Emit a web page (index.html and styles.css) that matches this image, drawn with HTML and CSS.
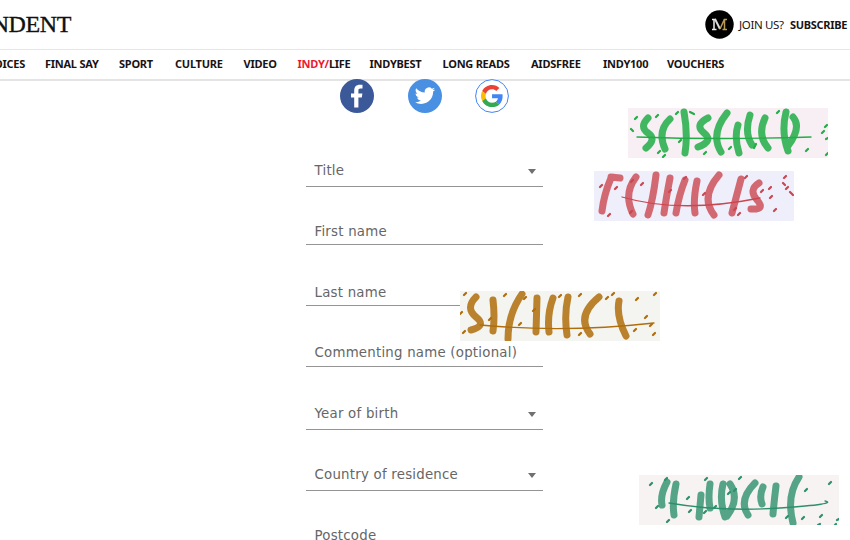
FILE: index.html
```html
<!DOCTYPE html>
<html lang="en">
<head>
<meta charset="utf-8">
<title>Register</title>
<link rel="stylesheet" href="styles.css">
</head>
<body>
<header class="masthead">
  <div class="brand">INDEPENDENT</div>
  <div class="account">
    <svg class="member" viewBox="0 0 29 29"><circle cx="14.5" cy="14.5" r="14.2" fill="#000"/><g fill="none"><path d="M7 9.500h4M9 9v11M7 19.500h4.500" stroke="#eee" stroke-width="1.500"/><path d="M10 9l5 10" stroke="#ddd" stroke-width="2"/><path d="M15 19l4.500-10M19.500 9v11M17.500 19.500h4.500M19 9.500h3" stroke="#b99a56" stroke-width="1.500"/></g></svg>
    <span class="join">JOIN US?</span><b class="subscribe">SUBSCRIBE</b>
  </div>
</header>
<nav class="nav">
  <a class="first">VOICES</a><a>FINAL SAY</a><a>SPORT</a><a>CULTURE</a><a>VIDEO</a><a><span class="red">INDY/</span>LIFE</a><a>INDYBEST</a><a>LONG READS</a><a>AIDSFREE</a><a>INDY100</a><a>VOUCHERS</a>
</nav>
<main class="form">
  <div class="social">
    <svg viewBox="0 0 34 34"><circle cx="17" cy="17" r="17" fill="#3b5998"/><path fill="#fff" d="M14.200 28.500V18.500H11v-4h3.200v-2.800c0-4 2.100-6 5.600-6h2.700v3.800h-2c-1.600 0-2.100.8-2.100 2.100v2.900h4l-.6 4h-3.400v10z"/></svg>
    <svg viewBox="0 0 34 34"><circle cx="17" cy="17" r="17" fill="#4990e2"/><path transform="translate(6.800 6.500) scale(.85)" fill="#fff" d="M23.953 4.570a10 10 0 0 1-2.825.775 4.958 4.958 0 0 0 2.163-2.723 9.990 9.990 0 0 1-3.127 1.184 4.920 4.920 0 0 0-8.384 4.482C7.690 8.095 4.067 6.130 1.640 3.162a4.822 4.822 0 0 0-.666 2.475c0 1.710.87 3.213 2.188 4.096a4.904 4.904 0 0 1-2.228-.616v.06a4.923 4.923 0 0 0 3.946 4.827 4.996 4.996 0 0 1-2.212.085 4.936 4.936 0 0 0 4.604 3.417A9.867 9.867 0 0 1 0 19.540a13.995 13.995 0 0 0 7.557 2.209c9.053 0 13.998-7.496 13.998-13.985 0-.21 0-.42-.015-.63a9.935 9.935 0 0 0 2.413-2.564z"/></svg>
    <svg viewBox="0 0 34 34"><circle cx="17" cy="17" r="16.400" fill="#fff" stroke="#4285f4" stroke-width="1"/><g transform="translate(6 6) scale(.46)"><path fill="#ea4335" d="M24 9.500c3.540 0 6.710 1.220 9.210 3.600l6.850-6.850C35.900 2.380 30.470 0 24 0 14.620 0 6.510 5.380 2.560 13.220l7.980 6.190C12.430 13.720 17.740 9.500 24 9.500z"/><path fill="#4285f4" d="M46.980 24.550c0-1.570-.15-3.090-.38-4.550H24v9.020h12.940c-.58 2.960-2.260 5.480-4.780 7.180l7.730 6c4.510-4.180 7.090-10.360 7.090-17.650z"/><path fill="#fbbc05" d="M10.530 28.590a14.500 14.500 0 0 1 0-9.180l-7.980-6.190a24 24 0 0 0 0 21.560z"/><path fill="#34a853" d="M24 48c6.480 0 11.930-2.130 15.890-5.810l-7.730-6c-2.150 1.450-4.920 2.300-8.160 2.300-6.260 0-11.570-4.220-13.470-9.910l-7.980 6.190C6.510 42.620 14.620 48 24 48z"/></g></svg>
  </div>
  <div class="fields">
    <div class="field select">Title<i></i></div>
    <div class="field">First name</div>
    <div class="field">Last name</div>
    <div class="field">Commenting name (optional)</div>
    <div class="field select">Year of birth<i></i></div>
    <div class="field select">Country of residence<i></i></div>
    <div class="field">Postcode</div>
  </div>
</main>

<svg class="patch green" viewBox="0 0 200 50">
  <path class="brush" d="M20 10q-9 9 0 15t-2 15M42 11q-13 12-5 30M56 4q4 22 1 41M80 10q-14 7-4 15t-6 14M99 5q-17 21-6 39M110 17q-4 12 1 28M122 7q-6 18 2 30M137 10q-8 17 3 30M158 4q-5 20 2 39M165 9q9 10-5 29"/>
  <path class="line" d="M9 29Q96 32 183 29"/>
  <path class="speck" d="M7 11l2-2M3 21l2 2M28 9l2-2M48 6l2-2M62 4l4 2M30 45l2-2M35 49l2-2M51 34l2-2M76 46l2-2M101 41l2-2M126 40l2-4M149 5l2-2M178 43l2-2M194 25l2-2M197 19l2-2M198 31l2-1M198 47l2-2"/>
</svg>
<svg class="patch red-patch" viewBox="0 0 200 50">
  <path class="brush" d="M17 7Q10 23 8 40M17 6l9 1M42 6q-13 17-3 37M62 4q-3 25-8 40M76 7q-4 21-6 35M91 9q-6 15-9 33M103 10q-4 19-2 32M125 4q-19 22-5 40M147 8q-5 19-9 34M165 12q-11 7-2 17t-6 9"/>
  <path class="line" d="M28 26Q86 43 166 27"/>
  <path class="speck" d="M6 16l2-2M21 18l2-2M14 45l2-2M37 11l2-2M47 14l2-2M36 42l2-2M75 21l2-2M90 8l2-2M109 24l2-2M151 7l2-2M140 39l2-2M144 44l2-2M167 21l2-2M175 18l2-2M176 27l2-2M180 40l2-2M190 7l2-2M189 12l2 2M192 18l2-2M196 21l3 3"/>
</svg>
<svg class="patch gold" viewBox="0 0 200 50">
  <path class="brush" d="M16 6q-11 11 0 20t-5 13M33 9q2 17 0 31M62 3q-14 20-14 45M77 7l-1 34M93 7q-6 16-4 34M108 6q-4 18-1 38M139 6q-23 19-9 37M159 10q-3 15 7 35"/>
  <path class="line" d="M20 34Q105 42 194 32"/>
  <path class="speck" d="M4 4l2-2M0 23l2-2M3 42l2-2M29 29l2-2M59 34l2-2M64 8l2-2M44 5l2-2M73 20l2-2M99 6l2-2M119 5l2-2M119 44l2-2M146 8l2-2M152 4l2-2M176 9l2-2M174 40l2-2M185 27l2-2M190 35l2-2M194 4l2-2M193 44l2-2"/>
</svg>
<svg class="patch teal" viewBox="0 0 200 50">
  <path class="brush" d="M28 7q-7 13-5 23M37 9q-4 18-2 31M62 20l-2 22M71 9q-2 14 0 24M84 9q-4 16 2 33M91 9q10 15-3 32M116 8q-17 17-7 32M124 12q-4 9-1 17M137 11q-2 16-3 28M160 2q-13 19-6 46"/>
  <path class="line" d="M30 28Q82 37 141 33T186 26"/>
  <path class="speck" d="M11 10l2-2M26 5l2-2M17 33l2-2M28 47l2-2M48 24l2-2M50 37l2-2M66 5l2-2M65 38l2-2M75 33l2-2M89 19l2-2M95 16l2-2M100 4l2-2M147 43l2-2M163 44l2-2M166 16l2-2M190 9l2-2M181 42l2-2M179 50l2-1M196 50l1-1M198 45l2-1"/>
</svg>
</body>
</html>
```
FILE: styles.css
```css
* { box-sizing: border-box; }
body { margin: 0; width: 850px; height: 540px; overflow: hidden; background: #fff; position: relative; font-family: "DejaVu Sans", sans-serif; }
.masthead { height: 50px; border-bottom: 1px solid #e6e6e6; display: flex; justify-content: space-between; }
.brand { width: 71px; display: flex; justify-content: flex-end; font: 24px/48px "Liberation Serif", serif; letter-spacing: -.4px; color: #111; -webkit-text-stroke: .35px #111; }
.account { display: flex; align-items: center; height: 48px; margin-right: 3px; font: 11.500px "Noto Sans", sans-serif; color: #191313; white-space: nowrap; }
.member { width: 29px; height: 29px; margin-right: 5px; }
.join { width: 51px; letter-spacing: -.35px; }
.subscribe { width: 57px; font-size: 11px; letter-spacing: -.3px; }
.nav { height: 31px; border-bottom: 2px solid #e4e4e4; display: grid; grid-template-columns: 25px 74px 56px 68.500px 54px 72px 73px 88.500px 72px 64px 80px; font: bold 11px/27px "Noto Sans", sans-serif; letter-spacing: -.25px; color: #191313; white-space: nowrap; }
.nav .first { display: flex; justify-content: flex-end; }
.nav a + a { padding-left: 20px; }
.red { color: #ec1a2e; }
.form { width: 237px; height: 461px; margin-left: 306px; margin-top: -2px; overflow: hidden; }
.social { display: flex; gap: 33.500px; padding-left: 34px; height: 72px; }
.social svg { width: 34px; height: 34px; flex: none; }
.fields { display: grid; grid-auto-rows: 60.800px; align-items: start; }
.field { height: 33.400px; padding-left: 8.500px; border-bottom: 1px solid #949494; font-size: 13.330px; line-height: 40px; letter-spacing: .23px; color: #666; white-space: nowrap; }
.select { display: flex; justify-content: space-between; height: 36px; padding-right: 7px; }
.select i { width: 0; height: 0; margin-top: 18px; border: 5px solid transparent; border-top-color: #707070; border-bottom: 0; border-left-width: 4.500px; border-right-width: 4.500px; }
.patch { position: absolute; width: 200px; height: 50px; overflow: hidden; fill: none; stroke: currentColor; stroke-linecap: round; stroke-linejoin: round; }
.brush { stroke-width: 7; opacity: .85; }
.line { stroke-width: 1.300; }
.speck { stroke-width: 2.200; }
.green { left: 628px; top: 108px; background: #f7eff4; color: #22ad46; }
.red-patch { left: 594px; top: 171px; background: #efeffb; color: #ca4650; }
.red-patch .brush { opacity: .8; }
.gold { left: 460px; top: 291px; background: #f4f5f1; color: #b06d0b; }
.teal { left: 639px; top: 475px; background: #f7f3f3; color: #2c906c; }
.teal .brush { opacity: .8; }
```
